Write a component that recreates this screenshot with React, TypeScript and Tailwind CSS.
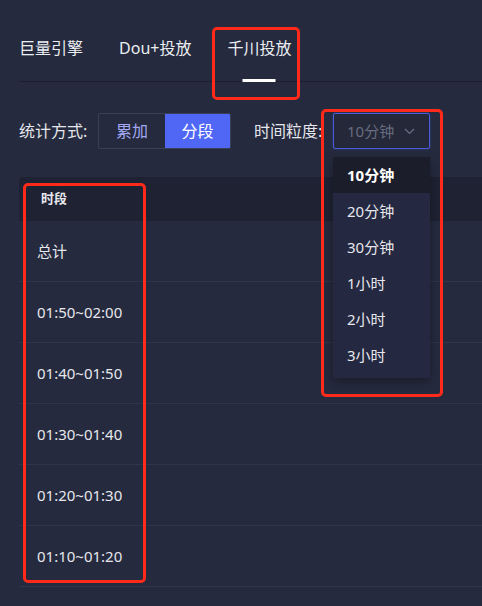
import React, { useState } from "react";

const tabs = ["巨量引擎", "Dou+投放", "千川投放"];
const grains = ["10分钟", "20分钟", "30分钟", "1小时", "2小时", "3小时"];
const rows = ["总计", "01:50~02:00", "01:40~01:50", "01:30~01:40", "01:20~01:30", "01:10~01:20"];

function Chevron() {
  return (
    <svg width="11" height="7" viewBox="0 0 11 7" fill="none">
      <path d="M1 1l4.5 4.5L10 1" stroke="#6b6f84" strokeWidth="1.2" />
    </svg>
  );
}

export default function App() {
  const [active] = useState(2);
  const [mode, setMode] = useState("seg");
  const [grain, setGrain] = useState("10分钟");

  return (
    <div className="relative w-[482px] h-[606px] overflow-hidden bg-[#252a3e] text-[#e6e7ec] font-['Noto_Sans','Noto_Sans_CJK_SC',sans-serif]">
      {/* tabs */}
      <div className="ml-[19px] h-[82px] flex items-end gap-[36px] border-b border-[#1c1f2f]">
        {tabs.map((t, i) => (
          <div key={t} className="relative h-full flex items-center pt-[14px] text-[16px] text-[#eceef2]">
            {t}
            {i === active && (
              <div className="absolute left-1/2 -translate-x-1/2 bottom-[-1px] w-[33px] h-[3px] bg-white" />
            )}
          </div>
        ))}
      </div>

      {/* filters */}
      <div className="mt-[31px] ml-[19px] flex items-center h-[36px] text-[16px]">
        <span className="w-[79px]">统计方式:</span>
        <div className="flex h-[36px] w-[133px] border border-[#3a3f56] rounded-[2px] overflow-hidden">
          <button
            onClick={() => setMode("acc")}
            className={
              mode === "acc"
                ? "w-[66px] bg-[#5067f6] text-white"
                : "w-[66px] text-[#a3a8f2]"
            }
          >
            累加
          </button>
          <button
            onClick={() => setMode("seg")}
            className={
              mode === "seg"
                ? "flex-1 bg-[#5067f6] text-white"
                : "flex-1 text-[#a3a8f2]"
            }
          >
            分段
          </button>
        </div>
        <span className="ml-[23px] w-[79px]">时间粒度:</span>
        <div className="w-[97px] h-[36px] flex items-center justify-between pl-[13px] pr-[14px] border border-[#4c5ddc] rounded-[2px] bg-[#242839] shadow-[0_0_3px_rgba(80,103,246,0.35)] text-[15px] text-[#686c80]">
          {grain}
          <Chevron />
        </div>
      </div>

      {/* table */}
      <div className="mt-[28px] ml-[19px]">
        <div className="h-[44px] flex items-center pl-[22px] bg-[#1f2233] rounded-tl-[4px] text-[13px] font-bold text-[#e8e9ee]">
          时段
        </div>
        {rows.map((r) => (
          <div key={r} className="h-[61px] flex items-center pl-[18px] border-b border-[#30354a] text-[15px] text-[#e6e7ec]">
            {r}
          </div>
        ))}
      </div>

      {/* dropdown menu */}
      <div className="absolute left-[333px] top-[157px] w-[97px] pb-[5px] bg-[#242840] rounded-[2px] shadow-[0_4px_12px_rgba(0,0,0,0.35)]">
        {grains.map((g) => (
          <div
            key={g}
            onClick={() => setGrain(g)}
            className={
              g === grain
                ? "h-[36px] flex items-center pl-[14px] text-[15px] font-bold text-white bg-[#1b1d2a]"
                : "h-[36px] flex items-center pl-[14px] text-[15px] text-[#e6e7ec]"
            }
          >
            {g}
          </div>
        ))}
      </div>

      {/* annotation boxes */}
      <div className="absolute left-[212px] top-[27px] w-[88px] h-[73px] border-[3px] border-[#ff2a1a] rounded-[5px]" />
      <div className="absolute left-[321px] top-[109px] w-[122px] h-[288px] border-[3px] border-[#ff2a1a] rounded-[5px]" />
      <div className="absolute left-[23px] top-[183px] w-[123px] h-[400px] border-[3px] border-[#ff2a1a] rounded-[5px]" />
    </div>
  );
}
